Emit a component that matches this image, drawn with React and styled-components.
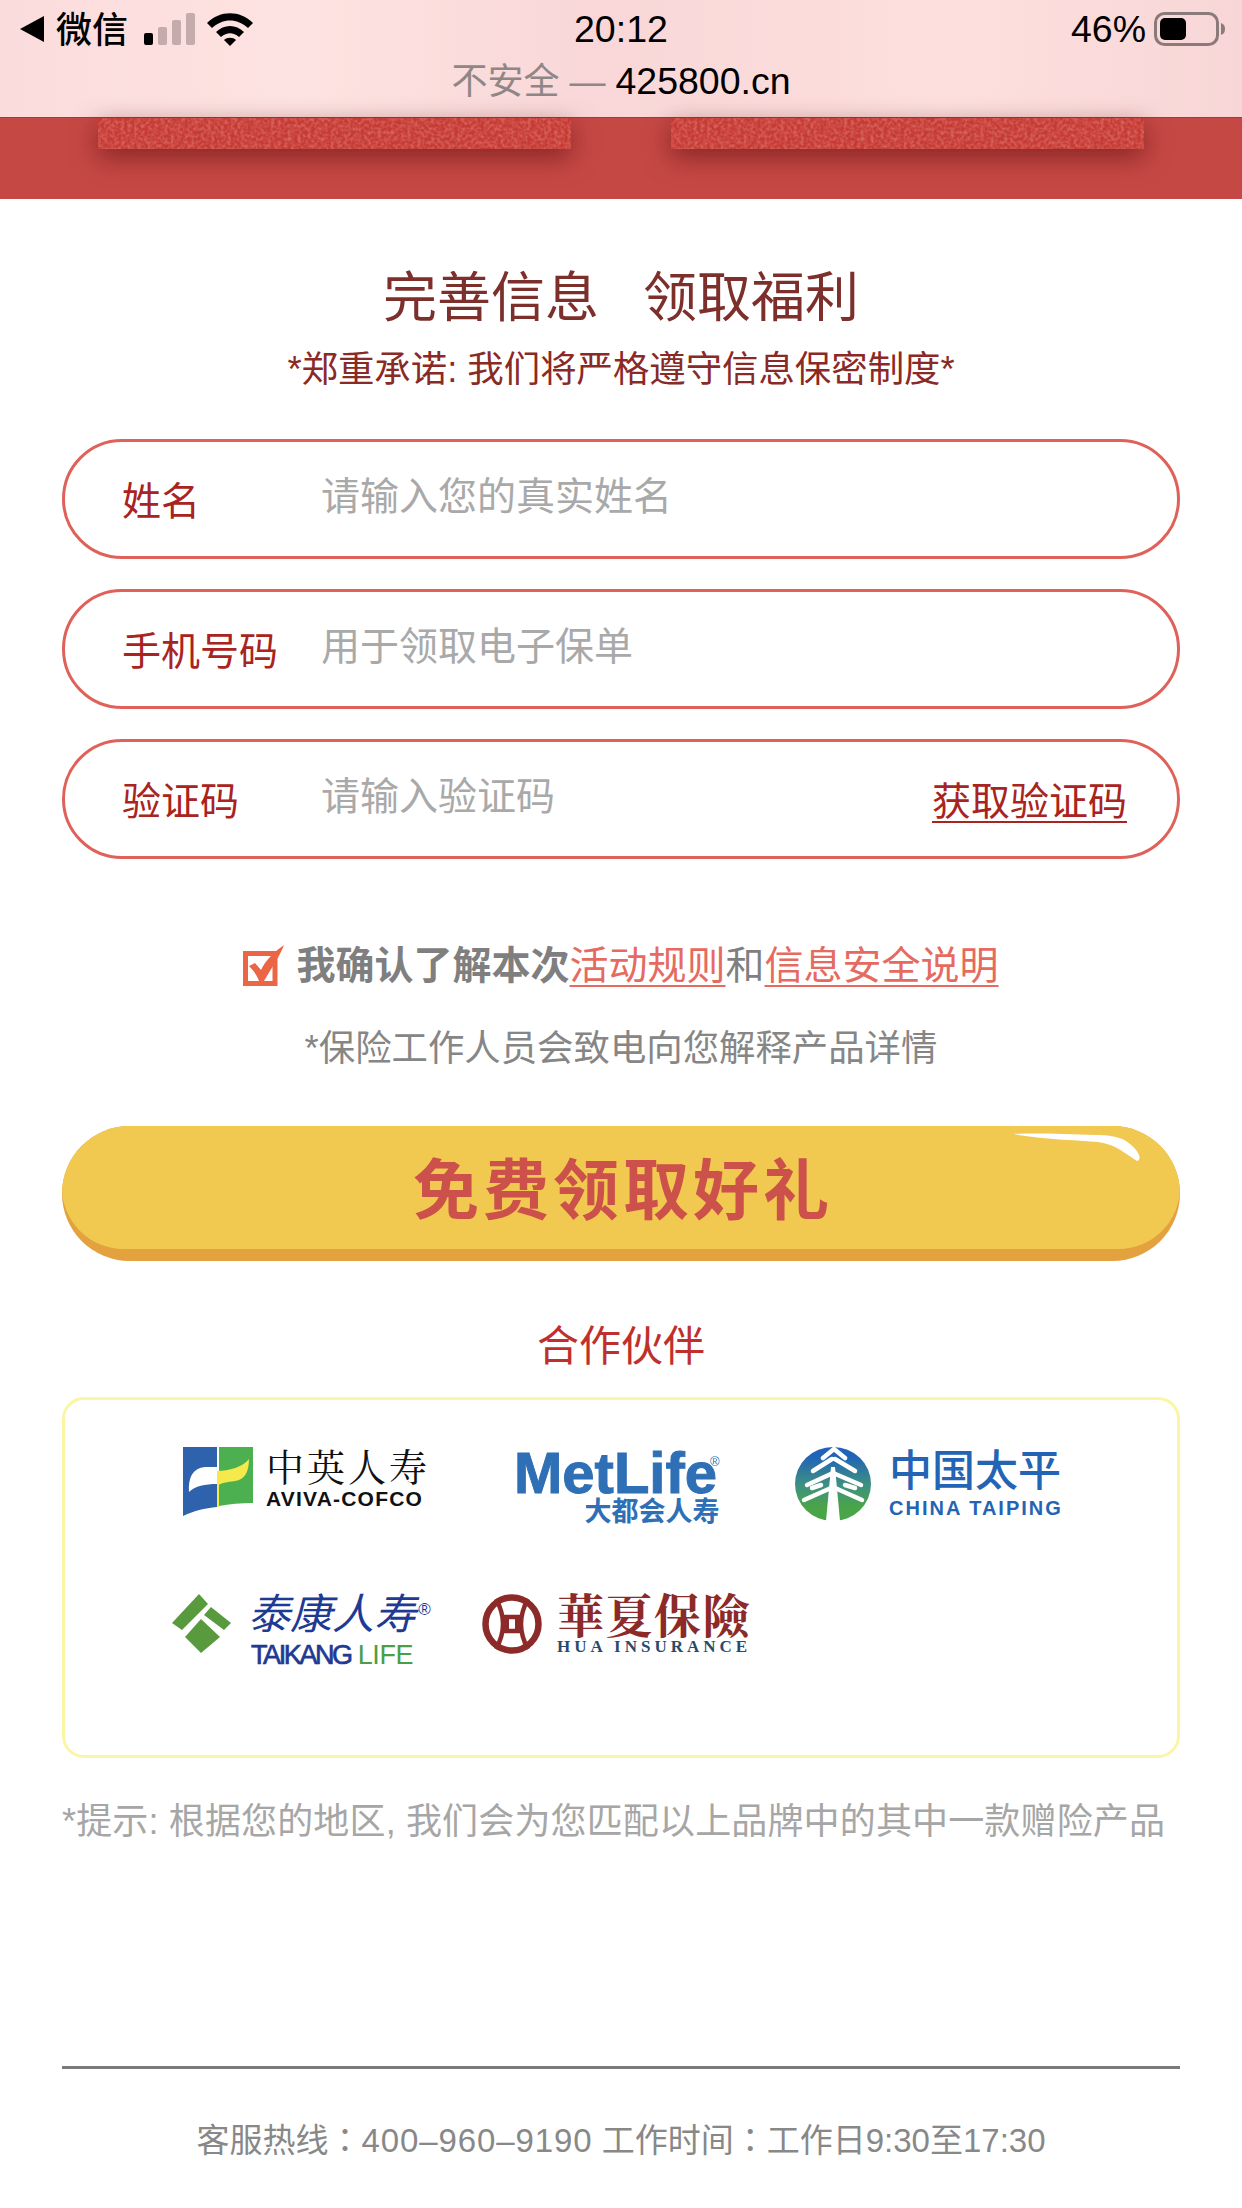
import React from 'react'
import styled, { createGlobalStyle } from 'styled-components'

const sans = `"Liberation Sans", "Noto Sans CJK SC", sans-serif`
const serif = `"Liberation Serif", "Noto Serif CJK SC", "Noto Sans CJK SC", serif`

const GlobalStyle = createGlobalStyle`
  html, body {
    margin: 0;
    padding: 0;
    background: #fff;
    font-family: ${sans};
  }
  * {
    box-sizing: border-box;
  }
`

const Page = styled.div`
  width: 1242px;
  height: 2208px;
  overflow: hidden;
  background: #fff;
`

const TopBar = styled.header`
  height: 118px;
  border-bottom: 1px solid #a23a38;
  background: linear-gradient(
    90deg,
    #fbdcdc 0%,
    #fde3e1 24%,
    #f9d7d8 48%,
    #fbdcdb 66%,
    #fde0de 76%,
    #f8d6d7 100%
  );
`

const StatusRow = styled.div`
  position: relative;
  display: flex;
  align-items: center;
  justify-content: space-between;
  height: 58px;
  padding: 0 16px 0 20px;
  color: #000;
`

const StatusGroup = styled.div`
  display: flex;
  align-items: center;
  gap: ${({ $gap }) => $gap || 0}px;
`

const Carrier = styled.span`
  font-size: 36px;
  font-weight: 500;
  margin: -4px 16px 0 12px;
`

const WifiSlot = styled.span`
  display: flex;
  margin-left: 12px;
`

const Clock = styled.span`
  position: absolute;
  left: 574px;
  top: 8px;
  font-size: 37.5px;
  line-height: 42px;
`

const Percent = styled.span`
  font-size: 37.5px;
`

const AddressLine = styled.div`
  display: flex;
  justify-content: center;
  align-items: baseline;
  gap: 10px;
  margin-top: 1px;
  font-size: 36px;
  line-height: 44px;
  color: #8f8787;
`

const Domain = styled.span`
  font-size: 37.5px;
  color: #000;
`

const Band = styled.div`
  display: flex;
  justify-content: center;
  gap: 100px;
  height: 81px;
  background: #c64845;
`

const BandCard = styled.div`
  width: 473px;
  height: 31px;
  overflow: hidden;
  background: #c63a34;
  box-shadow: 0 8px 26px rgba(80, 10, 10, 0.55);
`

const Main = styled.main`
  padding: 0 62px;
`

const Title = styled.h1`
  display: flex;
  justify-content: center;
  gap: 44px;
  margin: 64px 0 0;
  font-size: 54px;
  line-height: 70px;
  font-weight: 400;
  color: #7c2f2b;
`

const Subtitle = styled.p`
  margin: 13px 0 0;
  text-align: center;
  font-size: 36.4px;
  line-height: 48px;
  color: #8a2a26;
`

const Fields = styled.div`
  display: flex;
  flex-direction: column;
  gap: 30px;
  margin-top: 45px;
`

const Field = styled.label`
  display: flex;
  align-items: center;
  height: 120px;
  padding: 0 50px 0 57px;
  border: 3px solid #e0615a;
  border-radius: 60px;
`

const FieldLabel = styled.span`
  flex: 0 0 199px;
  margin-top: -3px;
  font-size: 39px;
  color: #a92320;
`

const FieldInput = styled.input`
  flex: 1;
  min-width: 0;
  margin-top: -4px;
  padding: 0;
  border: 0;
  outline: 0;
  background: transparent;
  font-family: ${sans};
  font-size: 39px;

  &::placeholder {
    color: #a9a9a9;
    opacity: 1;
  }
`

const CodeLink = styled.a`
  margin-top: -3px;
  font-size: 39px;
  color: #a92320;
  text-decoration: underline;
  text-underline-offset: 6px;
  text-decoration-thickness: 2px;
`

const Consent = styled.div`
  display: flex;
  justify-content: center;
  align-items: center;
  gap: 11px;
  height: 50px;
  margin-top: 78px;
  font-size: 39px;
  color: #7f7f7f;
`

const ConsentStrong = styled.strong`
  font-weight: 700;
`

const CheckSlot = styled.span`
  display: flex;
  margin-top: 6px;
`

const RuleLink = styled.a`
  color: #e56a60;
  text-decoration: underline;
  text-underline-offset: 6px;
  text-decoration-thickness: 2px;
`

const Hint = styled.p`
  margin: 38px 0 0;
  text-align: center;
  font-size: 36.4px;
  line-height: 48px;
  color: #868686;
`

const ClaimButton = styled.button`
  position: relative;
  display: block;
  width: 100%;
  height: 135px;
  margin-top: 53px;
  padding: 0 0 12px;
  border: 0;
  border-radius: 68px;
  background: #e3a23e;
  overflow: hidden;
  font-family: ${sans};

  &::before {
    content: '';
    position: absolute;
    inset: 0 0 12px;
    border-radius: 68px;
    background: #f1c951;
  }
`

const ClaimText = styled.span`
  position: relative;
  top: 4px;
  font-size: 66px;
  line-height: 123px;
  font-weight: 700;
  letter-spacing: 4px;
  margin-right: -4px;
  color: #cb514a;
`

const Shine = styled.svg`
  position: absolute;
  left: 952px;
  top: 7px;
`

const PartnerTitle = styled.h2`
  margin: 58px 0 0;
  text-align: center;
  font-size: 42px;
  line-height: 56px;
  font-weight: 400;
  color: #bf302c;
`

const PartnerBox = styled.section`
  display: flex;
  flex-direction: column;
  height: 361px;
  margin-top: 22px;
  padding-top: 47px;
  border: 3px solid #fbf6a4;
  border-radius: 22px;
`

const PartnerRow = styled.div`
  display: flex;
  align-items: flex-start;
  gap: ${({ $gap }) => $gap}px;
  height: 74px;
  margin-top: ${({ $top }) => $top || 0}px;
  padding-left: ${({ $left }) => $left}px;
`

const Logo = styled.div`
  display: flex;
  align-items: flex-start;
  flex: 0 0 ${({ $width }) => $width}px;
  min-width: 0;
  gap: ${({ $gap }) => $gap}px;

  svg {
    flex: none;
  }
`

const LogoText = styled.div`
  display: flex;
  flex: none;
  flex-direction: column;
  align-items: ${({ $align }) => $align || 'flex-start'};
`

const Wordmark = styled.span`
  font-family: ${({ $serif }) => ($serif ? serif : sans)};
  font-size: ${({ $size }) => $size}px;
  line-height: ${({ $line }) => $line}px;
  font-weight: ${({ $weight }) => $weight || 400};
  font-style: ${({ $italic }) => ($italic ? 'italic' : 'normal')};
  letter-spacing: ${({ $spacing }) => $spacing || 0}px;
  -webkit-text-stroke: ${({ $stroke }) => $stroke || 0}px ${({ $color }) => $color};
  color: ${({ $color }) => $color};
  white-space: nowrap;
`

const WordLine = styled.div`
  display: flex;
  gap: 7px;
  height: ${({ $height }) => $height}px;
  padding-left: 3px;
`

const Registered = styled.sup`
  margin-left: ${({ $pull }) => $pull || 0}px;
  font-size: ${({ $size }) => $size}px;
  line-height: 0;
  vertical-align: ${({ $rise }) => $rise}px;
  font-weight: 400;
  -webkit-text-stroke: 0;
`

const Tip = styled.p`
  margin: 39px 0 0;
  font-size: 36px;
  letter-spacing: 0.15px;
  line-height: 50px;
  white-space: nowrap;
  color: #a6a6a6;
`

const Divider = styled.hr`
  height: 3px;
  margin: 219px 0 0;
  border: 0;
  background: #7b7b7b;
`

const Footer = styled.footer`
  margin-top: 44px;
  text-align: center;
  font-size: 33px;
  line-height: 50px;
  color: #888;
`

const Digits = styled.span`
  letter-spacing: 0.9px;
`

const WideColon = styled.span`
  font-family: "Noto Sans CJK TC", sans-serif;
`

const BackArrow = () => (
  <svg width="24" height="26" viewBox="0 0 24 26">
    <path d="M24 0V26L0 13Z" fill="#000" />
  </svg>
)

const Signal = () => (
  <svg width="51" height="32" viewBox="0 0 51 32">
    <rect x="0" y="20" width="9" height="12" rx="2" fill="#000" />
    <rect x="14" y="14" width="9" height="18" rx="2" fill="#c5acac" />
    <rect x="28" y="7" width="9" height="25" rx="2" fill="#c5acac" />
    <rect x="42" y="0" width="9" height="32" rx="2" fill="#c5acac" />
  </svg>
)

const Wifi = () => (
  <svg width="46" height="33" viewBox="0 0 46 33">
    <path d="M0 10C13-3 33-3 46 10L41 15C30 5 16 5 5 15Z" fill="#000" />
    <path d="M9 19C17 11 29 11 37 19L32 24C26 19 20 19 14 24Z" fill="#000" />
    <path d="M17 27C20 24 26 24 29 27L23 33Z" fill="#000" />
  </svg>
)

const Battery = () => (
  <svg width="72" height="34" viewBox="0 0 72 34">
    <rect x="1.5" y="1.5" width="62" height="31" rx="9" fill="none" stroke="#8a7a7a" strokeWidth="3" />
    <rect x="6" y="6" width="26" height="22" rx="5" fill="#000" />
    <path d="M67 11C70 12 71 14 71 17C71 20 70 22 67 23Z" fill="#8a7a7a" />
  </svg>
)

// mottled paper texture of the red cards behind the top bar
const PaperNoise = ({ id }) => (
  <svg width="473" height="31">
    <filter id={id}>
      <feTurbulence type="fractalNoise" baseFrequency="0.3" numOctaves="2" seed="4" />
      <feColorMatrix values="0 0 0 0 0.9  0 0 0 0 0.42  0 0 0 0 0.38  0 0 0 0.8 -0.28" />
    </filter>
    <rect width="473" height="31" filter={`url(#${id})`} />
  </svg>
)

const CheckMark = () => (
  <svg width="42" height="41" viewBox="0 0 42 41">
    <path d="M2.5 8.5H32V38.5H2.5Z" fill="none" stroke="#ec6645" strokeWidth="5" />
    <path d="M6 21L12 18L18 25C22 16 31 7 41 0C37 11 28 24 21 36H16C14 30 10 25 6 21Z" fill="#ec6645" />
  </svg>
)

const AvivaMark = () => (
  <svg width="70" height="69" viewBox="0 0 70 69">
    <path d="M0 0H34V60C22 61 10 64 0 69Z" fill="#2f62ad" />
    <path d="M36 0H70V56C58 56 46 57 36 59Z" fill="#4cb050" />
    <path d="M34 38H36V60H34Z" fill="#f6e94b" />
    <path d="M34 24C46 24 60 20 66 12C66 24 62 33 52 34C44 35 38 36 34 39Z" fill="#f6e94b" />
    <path d="M6 45C5 30 10 21 22 20H34V37C22 37 12 39 6 45Z" fill="#fff" />
  </svg>
)

const TaipingMark = () => (
  <svg width="76" height="74" viewBox="0 0 76 74">
    <defs>
      <linearGradient id="taiping" x1="0" y1="0" x2="0" y2="1">
        <stop offset="0.12" stopColor="#2063b8" />
        <stop offset="0.5" stopColor="#3d8f83" />
        <stop offset="0.82" stopColor="#4aa548" />
      </linearGradient>
    </defs>
    <ellipse cx="38" cy="37" rx="38" ry="37" fill="url(#taiping)" />
    <g fill="none" stroke="#fff" strokeWidth="4.5" strokeLinecap="round">
      <path d="M39 2L28 11M39 2L50 11" />
      <path d="M37 12L18 24M40 12L60 24" />
      <path d="M38 26L12 38M38 26L66 38" />
      <path d="M26 38L17 41M50 38L60 41" />
      <path d="M36 41L9 53M40 41L67 53" />
    </g>
    <path d="M31 74L36 20H40L45 74Z" fill="#fff" />
  </svg>
)

const TaikangMark = () => (
  <svg width="60" height="59" viewBox="0 0 60 59">
    <path d="M0 29L27 0L36 10L10 36Z" fill="#5a9a3f" />
    <path d="M39 13L59 29L52 36L32 21Z" fill="#5a9a3f" />
    <path d="M29 25L48 43L29 59L13 43Z" fill="#5a9a3f" />
  </svg>
)

const HuaMark = () => (
  <svg width="60" height="60" viewBox="0 0 60 60">
    <circle cx="30" cy="30" r="26.5" fill="none" stroke="#8c2a2a" strokeWidth="6.5" />
    <g fill="none" stroke="#8c2a2a" strokeWidth="4.5">
      <path d="M14 5C19 14 21 20 21 30C21 40 19 46 14 55" />
      <path d="M46 5C41 14 39 20 39 30C39 40 41 46 46 55" />
      <path d="M20 23H40M20 37H40" />
      <path d="M25 21V39M35 21V39" strokeWidth="4" />
    </g>
  </svg>
)

const App = () => {
  return (
    <Page>
      <GlobalStyle />
      <TopBar>
        <StatusRow>
          <StatusGroup>
            <BackArrow />
            <Carrier>微信</Carrier>
            <Signal />
            <WifiSlot>
              <Wifi />
            </WifiSlot>
          </StatusGroup>
          <Clock>20:12</Clock>
          <StatusGroup $gap={8}>
            <Percent>46%</Percent>
            <Battery />
          </StatusGroup>
        </StatusRow>
        <AddressLine>
          <span>不安全 —</span>
          <Domain>425800.cn</Domain>
        </AddressLine>
      </TopBar>

      <Band>
        <BandCard>
          <PaperNoise id="paper-left" />
        </BandCard>
        <BandCard>
          <PaperNoise id="paper-right" />
        </BandCard>
      </Band>

      <Main>
        <Title>
          <span>完善信息</span>
          <span>领取福利</span>
        </Title>
        <Subtitle>*郑重承诺: 我们将严格遵守信息保密制度*</Subtitle>

        <Fields>
          <Field>
            <FieldLabel>姓名</FieldLabel>
            <FieldInput placeholder="请输入您的真实姓名" />
          </Field>
          <Field>
            <FieldLabel>手机号码</FieldLabel>
            <FieldInput placeholder="用于领取电子保单" />
          </Field>
          <Field>
            <FieldLabel>验证码</FieldLabel>
            <FieldInput placeholder="请输入验证码" />
            <CodeLink>获取验证码</CodeLink>
          </Field>
        </Fields>

        <Consent>
          <CheckSlot>
            <CheckMark />
          </CheckSlot>
          <span>
            <ConsentStrong>我确认了解本次</ConsentStrong>
            <RuleLink>活动规则</RuleLink>和<RuleLink>信息安全说明</RuleLink>
          </span>
        </Consent>
        <Hint>*保险工作人员会致电向您解释产品详情</Hint>

        <ClaimButton>
          <ClaimText>免费领取好礼</ClaimText>
          <Shine width="127" height="28" viewBox="0 0 127 28">
            <path d="M0 1C30 7 68 7 84 9C102 11 113 22 123 28C129 26 124 16 112 8C104 3 92 2 82 2C50 1 20 0 0 1Z" fill="#fff" />
          </Shine>
        </ClaimButton>

        <PartnerTitle>合作伙伴</PartnerTitle>
        <PartnerBox>
          <PartnerRow $left={118} $gap={88}>
            <Logo $width={243} $gap={13}>
              <AvivaMark />
              <LogoText>
                <Wordmark $serif $size={38} $line={42} $spacing={3} $color="#111">中英人寿</Wordmark>
                <Wordmark $size={21} $line={20} $weight={700} $spacing={1.2} $color="#111">AVIVA-COFCO</Wordmark>
              </LogoText>
            </Logo>
            <Logo $width={193} $gap={0}>
              <LogoText $align="flex-end">
                <Wordmark $size={58} $line={52} $weight={700} $stroke={1} $color="#2e6fb5">
                  MetLife
                  <Registered $pull={-7} $size={13} $rise={27}>®</Registered>
                </Wordmark>
                <Wordmark $size={27} $line={26} $weight={700} $color="#2e6fb5">大都会人寿</Wordmark>
              </LogoText>
            </Logo>
            <Logo $width={266} $gap={18}>
              <TaipingMark />
              <LogoText>
                <Wordmark $size={43} $line={49} $weight={500} $color="#2464b4">中国太平</Wordmark>
                <Wordmark $size={20} $line={24} $weight={700} $spacing={2} $color="#2464b4">CHINA TAIPING</Wordmark>
              </LogoText>
            </Logo>
          </PartnerRow>
          <PartnerRow $left={107} $gap={45} $top={73}>
            <Logo $width={265} $gap={16}>
              <TaikangMark />
              <LogoText>
                <Wordmark $size={42} $line={42} $italic $color="#1f3a93">
                  泰康人寿
                  <Registered $pull={2} $size={17} $rise={14}>®</Registered>
                </Wordmark>
                <WordLine $height={38}>
                  <Wordmark $size={27} $line={38} $spacing={-2.4} $stroke={0.7} $color="#1f3a93">TAIKANG</Wordmark>
                  <Wordmark $size={27} $line={38} $spacing={-0.4} $color="#4a9e45">LIFE</Wordmark>
                </WordLine>
              </LogoText>
            </Logo>
            <Logo $width={269} $gap={15}>
              <HuaMark />
              <LogoText>
                <Wordmark $serif $size={47} $line={46} $weight={700} $spacing={1.5} $color="#8c2a2a">華夏保險</Wordmark>
                <Wordmark $serif $size={17} $line={13} $weight={700} $spacing={4} $color="#2a4a6a">HUA INSURANCE</Wordmark>
              </LogoText>
            </Logo>
          </PartnerRow>
        </PartnerBox>

        <Tip>*提示: 根据您的地区, 我们会为您匹配以上品牌中的其中一款赠险产品</Tip>
        <Divider />
        <Footer>
          客服热线<WideColon>：</WideColon>
          <Digits>400–960–9190</Digits> 工作时间<WideColon>：</WideColon>工作日9:30至17:30
        </Footer>
      </Main>
    </Page>
  )
}

export default App
